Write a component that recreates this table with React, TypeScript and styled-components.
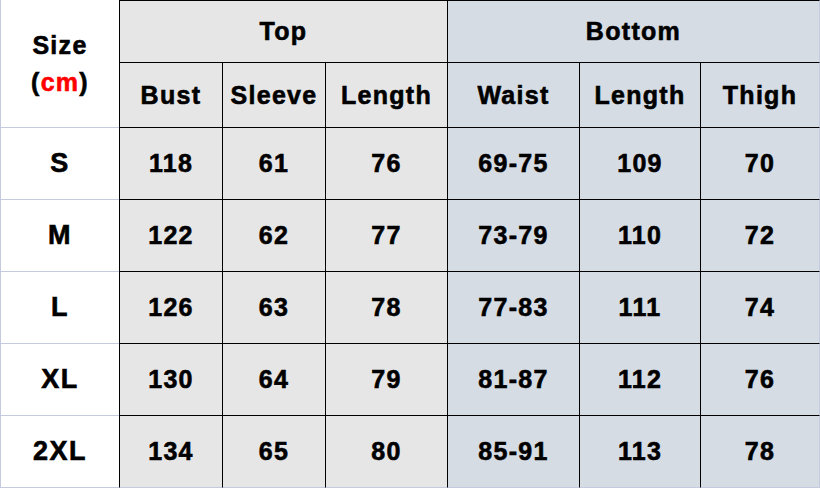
import React from "react";
import styled, { createGlobalStyle, css } from "styled-components";

const GlobalStyle = createGlobalStyle`
  html, body { margin: 0; padding: 0; background: #ffffff; }
  body { width: 820px; height: 488px; overflow: hidden; }
`;

type Tone = "white" | "gray" | "blue";

const toneColor: Record<Tone, string> = {
  white: "#ffffff",
  gray: "#e7e6e6",
  blue: "#d6dce4",
};

const LIGHT = "#c4cbde";
const DARK = "#000000";

const Sheet = styled.div`
  display: grid;
  grid-template-columns: 119px 103px 103px 122px 132px 121px 120px;
  grid-template-rows: 62px 65px 72px 72px 72px 72px 73px;
  width: 820px;
  height: 488px;
  font-family: "Liberation Sans", Arial, sans-serif;
  font-weight: 700;
  font-size: 25px;
  letter-spacing: 1.3px;
  color: #000;
`;

const Cell = styled.div<{
  $tone: Tone;
  $lastCol?: boolean;
  $lastRow?: boolean;
  $span?: number;
  $rows?: number;
  $light?: boolean;
  $noTop?: boolean;
  $big?: boolean;
}>`
  box-sizing: border-box;
  display: flex;
  align-items: center;
  justify-content: center;
  background: ${(p) => toneColor[p.$tone]};
  border-left: 1px solid ${(p) => (p.$light ? LIGHT : DARK)};
  border-top: ${(p) => (p.$noTop ? "none" : `1px solid ${p.$light ? LIGHT : DARK}`)};
  -webkit-text-stroke: 0.6px #000;
  ${(p) => p.$big && css`font-size: 27px; letter-spacing: 1.5px;`}
  ${(p) => p.$lastCol && css`border-right: 1px solid ${LIGHT};`}
  ${(p) => p.$lastRow && css`border-bottom: 1px solid ${LIGHT};`}
  ${(p) => p.$span && css`grid-column: span ${p.$span};`}
  ${(p) => p.$rows && css`grid-row: span ${p.$rows};`}
`;

const SizeLabel = styled.div`
  display: flex;
  flex-direction: column;
  align-items: center;
  line-height: 37px;
`;

const Unit = styled.span`
  color: #ff0000;
  -webkit-text-stroke: 0.6px #ff0000;
`;

const Paren = styled.span`
  color: #000;
`;

const rows: { size: string; values: string[] }[] = [
  { size: "S", values: ["118", "61", "76", "69-75", "109", "70"] },
  { size: "M", values: ["122", "62", "77", "73-79", "110", "72"] },
  { size: "L", values: ["126", "63", "78", "77-83", "111", "74"] },
  { size: "XL", values: ["130", "64", "79", "81-87", "112", "76"] },
  { size: "2XL", values: ["134", "65", "80", "85-91", "113", "78"] },
];

const subHeads = ["Bust", "Sleeve", "Length", "Waist", "Length", "Thigh"];

export default function App() {
  return (
    <>
      <GlobalStyle />
      <Sheet>
        <Cell $tone="white" $rows={2} $light $noTop>
          <SizeLabel>
            <span>Size</span>
            <span>
              <Paren>(</Paren>
              <Unit>cm</Unit>
              <Paren>)</Paren>
            </span>
          </SizeLabel>
        </Cell>
        <Cell $tone="gray" $span={3}>Top</Cell>
        <Cell $tone="blue" $span={3} $lastCol>Bottom</Cell>
        {subHeads.map((h, i) => (
          <Cell key={i} $tone={i < 3 ? "gray" : "blue"} $lastCol={i === 5}>
            {h}
          </Cell>
        ))}
        {rows.map((r, ri) => {
          const last = ri === rows.length - 1;
          return (
            <React.Fragment key={r.size}>
              <Cell $tone="white" $light $big $lastRow={last}>
                {r.size}
              </Cell>
              {r.values.map((v, i) => (
                <Cell
                  key={i}
                  $tone={i < 3 ? "gray" : "blue"}
                  $lastCol={i === 5}
                  $lastRow={last}
                >
                  {v}
                </Cell>
              ))}
            </React.Fragment>
          );
        })}
      </Sheet>
    </>
  );
}
